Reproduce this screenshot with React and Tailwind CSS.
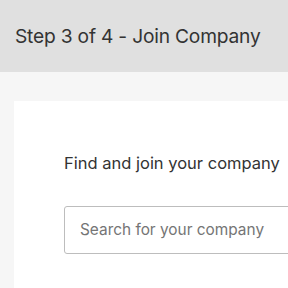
import React from 'react';

export default function App() {
  return (
    <div className="w-[288px] h-[288px] overflow-hidden bg-[#f6f6f6] font-['Inter',sans-serif]">
      <div className="h-[72px] bg-[#e0e0e0] flex items-center pl-[15px]">
        <h1 className="text-[19.2px] text-[#333] whitespace-nowrap tracking-[-0.2px]">Step 3 of 4 - Join Company</h1>
      </div>
      <div className="ml-[14px] mt-[29px] bg-white h-[300px] pl-[50px] pt-[52px]">
        <p className="text-[16.5px] text-[#333] whitespace-nowrap leading-[20px]">Find and join your company</p>
        <div className="mt-[33px] h-[48px] w-[300px] border border-[#bdbdbd] rounded-[3px] flex items-center pl-[15px]">
          <span className="text-[15.4px] text-[#757575] whitespace-nowrap">Search for your company</span>
        </div>
      </div>
    </div>
  );
}
